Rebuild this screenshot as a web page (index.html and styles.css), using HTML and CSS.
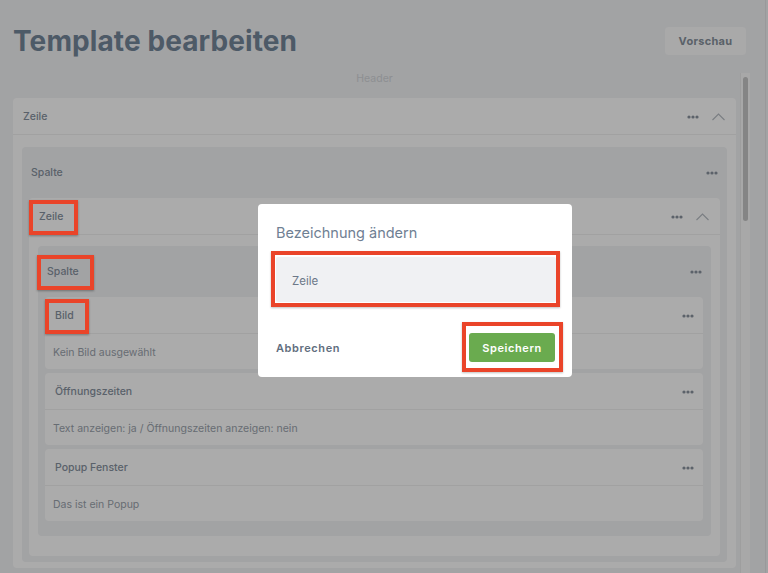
FILE: index.html
```html
<!DOCTYPE html>
<html>
<head>
  <title>Template bearbeiten</title>
  <link rel="stylesheet" href="styles.css">
</head>
<body>
  <div class="app">
    <header class="top">
      <h1>Template bearbeiten</h1>
      <button class="btn-preview">Vorschau</button>
    </header>

    <div class="scroller">
      <div class="scroll-content">
        <div class="section-label">Header</div>

        <!-- outer row -->
        <div class="block">
          <div class="block-head">
            <span class="block-title">Zeile</span>
            <span class="tools">
              <svg class="dots" width="12" height="4" viewBox="0 0 12 4"><circle cx="2" cy="2" r="1.6"/><circle cx="6" cy="2" r="1.6"/><circle cx="10" cy="2" r="1.6"/></svg>
              <svg class="chevron" width="13" height="8" viewBox="0 0 13 8"><polyline points="0.5,7 6.5,1 12.5,7"/></svg>
            </span>
          </div>
          <div class="block-body">
            <div class="column">
              <div class="column-head">
                <span class="block-title">Spalte</span>
                <svg class="dots" width="12" height="4" viewBox="0 0 12 4"><circle cx="2" cy="2" r="1.6"/><circle cx="6" cy="2" r="1.6"/><circle cx="10" cy="2" r="1.6"/></svg>
              </div>
              <div class="column-body">

                <!-- nested row -->
                <div class="block">
                  <div class="block-head">
                    <span class="block-title marked">Zeile</span>
                    <span class="tools">
                      <svg class="dots" width="12" height="4" viewBox="0 0 12 4"><circle cx="2" cy="2" r="1.6"/><circle cx="6" cy="2" r="1.6"/><circle cx="10" cy="2" r="1.6"/></svg>
                      <svg class="chevron" width="13" height="8" viewBox="0 0 13 8"><polyline points="0.5,7 6.5,1 12.5,7"/></svg>
                    </span>
                  </div>
                  <div class="block-body nested">
                    <div class="column">
                      <div class="column-head">
                        <span class="block-title marked">Spalte</span>
                        <svg class="dots" width="12" height="4" viewBox="0 0 12 4"><circle cx="2" cy="2" r="1.6"/><circle cx="6" cy="2" r="1.6"/><circle cx="10" cy="2" r="1.6"/></svg>
                      </div>
                      <div class="column-body items">
                        <div class="item">
                          <div class="item-head">
                            <span class="block-title marked">Bild</span>
                            <svg class="dots" width="12" height="4" viewBox="0 0 12 4"><circle cx="2" cy="2" r="1.6"/><circle cx="6" cy="2" r="1.6"/><circle cx="10" cy="2" r="1.6"/></svg>
                          </div>
                          <div class="item-body">Kein Bild ausgewählt</div>
                        </div>
                        <div class="item">
                          <div class="item-head">
                            <span class="block-title">Öffnungszeiten</span>
                            <svg class="dots" width="12" height="4" viewBox="0 0 12 4"><circle cx="2" cy="2" r="1.6"/><circle cx="6" cy="2" r="1.6"/><circle cx="10" cy="2" r="1.6"/></svg>
                          </div>
                          <div class="item-body">Text anzeigen: ja / Öffnungszeiten anzeigen: nein</div>
                        </div>
                        <div class="item">
                          <div class="item-head">
                            <span class="block-title">Popup Fenster</span>
                            <svg class="dots" width="12" height="4" viewBox="0 0 12 4"><circle cx="2" cy="2" r="1.6"/><circle cx="6" cy="2" r="1.6"/><circle cx="10" cy="2" r="1.6"/></svg>
                          </div>
                          <div class="item-body">Das ist ein Popup</div>
                        </div>
                      </div>
                    </div>
                  </div>
                </div>

              </div>
            </div>
          </div>
        </div>
      </div>

      <div class="scrollbar"><div class="thumb"></div></div>
    </div>
  </div>

  <div class="overlay"></div>

  <div class="modal">
    <div class="modal-title">Bezeichnung ändern</div>
    <div class="modal-input marked-box">Zeile</div>
    <div class="modal-footer">
      <button class="btn-cancel">Abbrechen</button>
      <button class="btn-save marked-btn">Speichern</button>
    </div>
  </div>
</body>
</html>
```

FILE: styles.css
```css
html, body {
  margin: 0;
  height: 573px;
  overflow: hidden;
}

body {
  font-family: Inter, "Noto Sans", sans-serif;
  background-color: #f2f3f5;
  color: #8a95a2;
}

.app {
  width: 765px;
  height: 573px;
  border-right: 1px solid #e4e5e7;
}

/* top bar */
.top {
  display: flex;
  align-items: center;
  justify-content: space-between;
  height: 62px;
  padding: 10px 19px 0 13px;
}

.top h1 {
  margin: 0;
  font-size: 28px;
  font-weight: 700;
  color: #74869a;
  letter-spacing: 0.1px;
}

.btn-preview {
  width: 81px;
  height: 28px;
  border: none;
  border-radius: 4px;
  background-color: #fdfdfd;
  color: #87919c;
  font-family: inherit;
  font-size: 11px;
  font-weight: 700;
  letter-spacing: 0.3px;
}

/* scroll area */
.scroller {
  display: flex;
  height: 500px;
  margin-top: 1px;
}

.scroll-content {
  flex: 1;
  margin-left: 13px;
}

.scrollbar {
  width: 10px;
  margin: 0 15px 0 4px;
  background-color: #fbfbfb;
  border-left: 1px solid #ececec;
  box-sizing: border-box;
  padding: 4px 2px 0 2px;
}

.thumb {
  height: 144px;
  border-radius: 3px;
  background-color: #c6c6c6;
}

.section-label {
  height: 25px;
  line-height: 11px;
  font-size: 10.5px;
  text-align: center;
  color: #d3d6da;
}

/* cards */
.block {
  background-color: white;
  border-radius: 4px;
}

.block-head,
.item-head,
.column-head {
  display: flex;
  align-items: center;
  justify-content: space-between;
  box-sizing: border-box;
}

.block-head {
  height: 37px;
  padding: 1px 11px 0 10px;
  border-bottom: 1px solid #f0f0f0;
}

.block-title {
  font-size: 10.5px;
  font-weight: 500;
  line-height: 16px;
  color: #86919e;
}

.tools {
  display: flex;
  align-items: center;
  gap: 13px;
}

.dots {
  fill: #8a939e;
  display: block;
}

.chevron {
  display: block;
  fill: none;
  stroke: #b6bcc3;
  stroke-width: 1.1;
}

.block-body {
  padding: 12px 9px 6px 9px;
}

.block-body.nested {
  padding: 11px 9px 20px 9px;
}

.column {
  background-color: #f2f3f5;
  border-radius: 4px;
}

.column-head {
  height: 51px;
  padding: 1px 9px 0 9px;
}

.column-body {
  padding: 0 7px 6px 7px;
}

.column-body.items {
  display: flex;
  flex-direction: column;
  gap: 4px;
  padding: 0 8px 15px 7px;
}

.item {
  background-color: white;
  border-radius: 4px;
}

.item-head {
  height: 37px;
  padding: 1px 9px 0 10px;
  border-bottom: 1px solid #f0f0f0;
}

.item-body {
  height: 35px;
  line-height: 37px;
  padding-left: 8px;
  font-size: 10.5px;
  color: #9aa2ac;
}

/* dim layer */
.overlay {
  position: fixed;
  top: 0;
  left: 0;
  right: 0;
  bottom: 0;
  background-color: rgba(0, 0, 0, 0.33);
  z-index: 10;
}

/* red annotation frames */
.marked {
  position: relative;
}

.marked::after {
  content: '';
  position: absolute;
  left: -10px;
  right: -15px;
  top: -9px;
  bottom: -10px;
  border: 4px solid #ea4429;
  box-shadow: 0 1px 2px rgba(0, 0, 0, 0.3);
  z-index: 20;
}

/* modal */
.modal {
  position: absolute;
  left: 258px;
  top: 204px;
  width: 314px;
  box-sizing: border-box;
  padding: 19px 16px 15px 18px;
  background-color: white;
  border-radius: 4px;
  z-index: 30;
}

.modal-title {
  font-size: 14.5px;
  line-height: 20px;
  color: #6f8093;
  margin-bottom: 14px;
}

.modal-input {
  position: relative;
  height: 42px;
  line-height: 42px;
  padding: 3px 0 0 16px;
  background-color: #f0f1f3;
  border-radius: 2px;
  font-size: 11.5px;
  color: #6c7888;
}

.marked-box::after {
  content: '';
  position: absolute;
  left: -5px;
  right: -4px;
  top: -6px;
  bottom: -5px;
  border: 4px solid #ea4429;
  box-shadow: 0 1px 2px rgba(0, 0, 0, 0.25);
}

.modal-footer {
  display: flex;
  align-items: center;
  justify-content: space-between;
  margin-top: 31px;
}

.btn-cancel {
  border: none;
  background: none;
  padding: 0;
  font-family: inherit;
  font-size: 11px;
  font-weight: 600;
  letter-spacing: 0.6px;
  color: #5f6e7e;
}

.btn-save {
  position: relative;
  width: 86px;
  height: 29px;
  margin-right: 1px;
  border: none;
  border-radius: 3px;
  background-color: #6aab4f;
  color: white;
  font-family: inherit;
  font-size: 11px;
  font-weight: 600;
  letter-spacing: 0.6px;
}

.marked-btn::after {
  content: '';
  position: absolute;
  left: -7px;
  right: -8px;
  top: -11px;
  bottom: -10px;
  border: 4px solid #ea4429;
  box-shadow: 0 1px 2px rgba(0, 0, 0, 0.25);
}
```
